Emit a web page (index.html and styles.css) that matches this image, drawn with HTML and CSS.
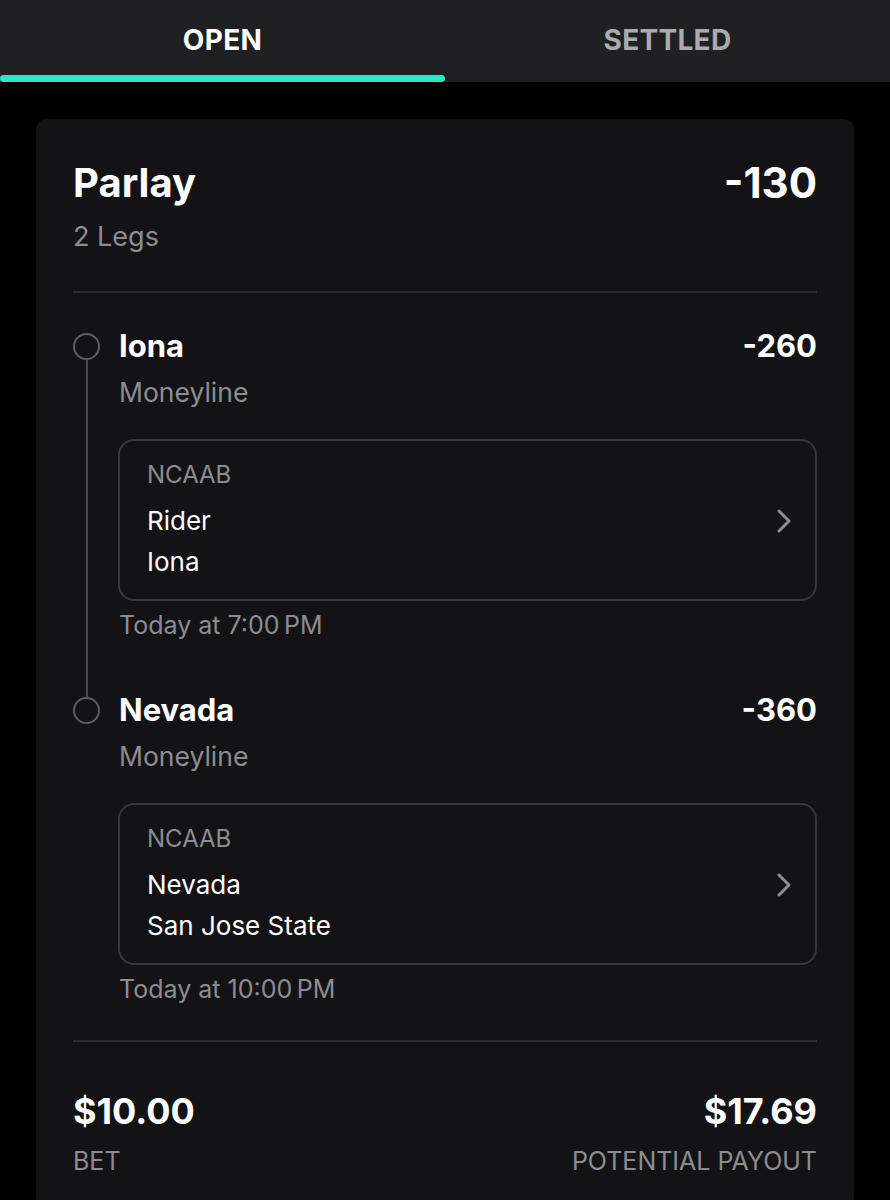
FILE: index.html
```html
<!DOCTYPE html>
<html lang="en">
<head>
  <meta charset="UTF-8" />
  <meta name="viewport" content="width=device-width, initial-scale=1" />
  <title>My Bets</title>
  <link rel="stylesheet" href="styles.css">
</head>
<body>
  <nav class="tabs">
    <a class="tab active" href="#">
      <span class="tab-label">OPEN</span>
      <span class="tab-bar"></span>
    </a>
    <a class="tab" href="#">
      <span class="tab-label">SETTLED</span>
      <span class="tab-bar"></span>
    </a>
  </nav>

  <main class="slip">
    <header class="slip-head">
      <div class="row">
        <h1 class="slip-title">Parlay</h1>
        <span class="slip-odds">-130</span>
      </div>
      <p class="slip-sub">2 Legs</p>
    </header>

    <div class="divider"></div>

    <ol class="legs">
      <li class="leg">
        <div class="marker">
          <span class="dot"></span>
          <span class="line"></span>
        </div>
        <div class="leg-body">
          <div class="row">
            <span class="leg-pick">Iona</span>
            <span class="leg-odds">-260</span>
          </div>
          <p class="leg-market">Moneyline</p>
          <a class="event" href="#">
            <div class="event-info">
              <span class="event-league">NCAAB</span>
              <span class="event-team">Rider</span>
              <span class="event-team">Iona</span>
            </div>
            <svg class="chevron" width="14" height="24" viewBox="0 0 14 24"><path d="M2 2 L12 12 L2 22" fill="none" stroke="currentColor" stroke-width="3" stroke-linecap="round" stroke-linejoin="round"/></svg>
          </a>
          <p class="leg-time">Today at 7:00&#8201;PM</p>
        </div>
      </li>
      <li class="leg">
        <div class="marker">
          <span class="dot"></span>
        </div>
        <div class="leg-body">
          <div class="row">
            <span class="leg-pick">Nevada</span>
            <span class="leg-odds">-360</span>
          </div>
          <p class="leg-market">Moneyline</p>
          <a class="event" href="#">
            <div class="event-info">
              <span class="event-league">NCAAB</span>
              <span class="event-team">Nevada</span>
              <span class="event-team">San Jose State</span>
            </div>
            <svg class="chevron" width="14" height="24" viewBox="0 0 14 24"><path d="M2 2 L12 12 L2 22" fill="none" stroke="currentColor" stroke-width="3" stroke-linecap="round" stroke-linejoin="round"/></svg>
          </a>
          <p class="leg-time">Today at 10:00&#8201;PM</p>
        </div>
      </li>
    </ol>

    <div class="divider"></div>

    <footer class="totals">
      <div class="total">
        <span class="amount">$10.00</span>
        <span class="caption">BET</span>
      </div>
      <div class="total right">
        <span class="amount">$17.69</span>
        <span class="caption">POTENTIAL PAYOUT</span>
      </div>
    </footer>
  </main>
</body>
</html>
```

FILE: styles.css
```css
body {
  margin: 0;
  padding: 0;
  background-color: #000;
  color: #fff;
  font-family: Inter, 'Noto Sans', sans-serif;
}

p {
  margin: 0;
}

/* tabs */
.tabs {
  display: flex;
  height: 82px;
  background: #1f2022;
}

.tab {
  flex: 1;
  display: flex;
  flex-direction: column;
  align-items: center;
  text-decoration: none;
  color: #ababae;
}

.tab-label {
  flex: 1;
  display: flex;
  align-items: center;
  padding-top: 5px;
  font-weight: 700;
  font-size: 28px;
  letter-spacing: 0.3px;
}

.tab.active .tab-label {
  color: #fff;
}

.tab-bar {
  align-self: stretch;
  height: 7px;
  border-radius: 4px;
}

.tab.active .tab-bar {
  background: #2ee6c3;
}

/* card */
.slip {
  margin: 37px 36px 0;
  padding: 38px 37px 30px;
  background: #131315;
  border-radius: 10px;
}

.row {
  display: flex;
  justify-content: space-between;
  align-items: center;
}

.slip-title {
  margin: 0;
  font-size: 40px;
  line-height: 48px;
  font-weight: 700;
}

.slip-odds {
  font-size: 42px;
  font-weight: 700;
}

.slip-sub {
  margin-top: 12px;
  font-size: 27px;
  line-height: 34px;
  color: #8d8d91;
}

.divider {
  height: 2px;
  background: #2c2c2e;
  margin: 37px 0 38px;
}

.legs + .divider {
  margin-top: 35px;
}

/* legs */
.legs {
  list-style: none;
  margin: -4px 0 0;
  padding: 0;
}

.leg {
  display: flex;
  gap: 19px;
}

.marker {
  display: flex;
  flex-direction: column;
  align-items: center;
  width: 27px;
  padding-top: 6px;
}

.dot {
  box-sizing: border-box;
  width: 27px;
  height: 27px;
  border: 2px solid #5e5e62;
  border-radius: 50%;
}

.line {
  flex: 1;
  width: 2px;
  background: #4a4a4d;
  margin-bottom: -6px;
}

.leg-body {
  flex: 1;
  padding-bottom: 50px;
}

.leg:last-child .leg-body {
  padding-bottom: 0;
}

.leg-pick,
.leg-odds {
  font-size: 31px;
  line-height: 38px;
  font-weight: 700;
}

.leg-market {
  margin-top: 10px;
  font-size: 26.5px;
  line-height: 34px;
  color: #8d8d91;
}

.event {
  display: flex;
  align-items: center;
  justify-content: space-between;
  margin: 30px 0 0 -1px;
  padding: 18px 24px 17px 27px;
  border: 2px solid #38383b;
  border-radius: 16px;
  text-decoration: none;
  color: #fff;
}

.event-info {
  display: flex;
  flex-direction: column;
}

.event-league {
  font-size: 24px;
  line-height: 32px;
  color: #8d8d91;
}

.event-team {
  font-size: 26px;
  line-height: 41px;
}

.event-league + .event-team {
  margin-top: 9px;
}

.chevron {
  color: #8d8d91;
}

.leg-time {
  margin-top: 8px;
  font-size: 25px;
  line-height: 32px;
  color: #8d8d91;
}

/* totals */
.totals {
  display: flex;
  justify-content: space-between;
  padding-top: 9px;
}

.total {
  display: flex;
  flex-direction: column;
  gap: 12px;
}

.total.right {
  align-items: flex-end;
}

.amount {
  font-size: 36px;
  line-height: 44px;
  font-weight: 700;
}

.caption {
  font-size: 25px;
  line-height: 32px;
  color: #8d8d91;
}
```
